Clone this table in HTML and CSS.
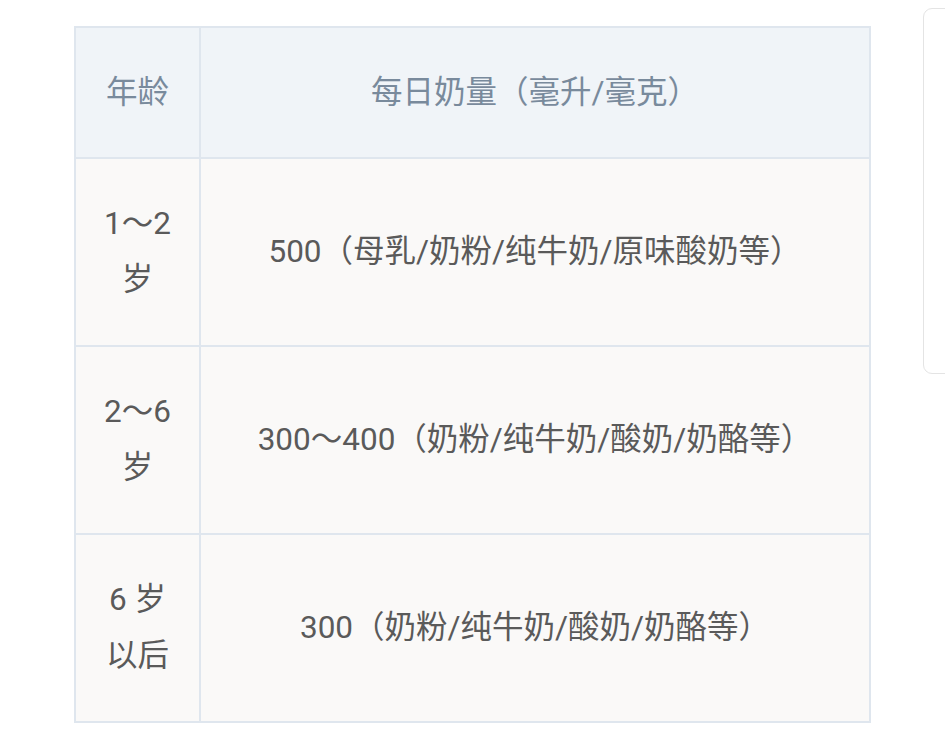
FILE: index.html
```html
<!DOCTYPE html>
<html lang="zh-CN">
<head>
<meta charset="utf-8">
<link rel="stylesheet" href="styles.css">
</head>
<body>
<div class="page">
  <table class="milk">
    <thead>
      <tr><th class="c1">年龄</th><th>每日奶量（毫升/毫克）</th></tr>
    </thead>
    <tbody>
      <tr><td class="c1">1～2<br>岁</td><td>500（母乳/奶粉/纯牛奶/原味酸奶等）</td></tr>
      <tr><td class="c1">2～6<br>岁</td><td>300～400（奶粉/纯牛奶/酸奶/奶酪等）</td></tr>
      <tr><td class="c1">6 岁<br>以后</td><td>300（奶粉/纯牛奶/酸奶/奶酪等）</td></tr>
    </tbody>
  </table>
  <div class="side"></div>
</div>
</body>
</html>
```
FILE: styles.css
```css
html, body {
  margin: 0;
  padding: 0;
  background: #ffffff;
  width: 945px;
  height: 747px;
  overflow: hidden;
}
body {
  font-family: Roboto, "Noto Sans CJK SC", sans-serif;
}
.page {
  position: relative;
  padding: 26px 0 0 74px;
}
.milk {
  border-collapse: collapse;
  width: 797px;
  table-layout: fixed;
  font-size: 31.5px;
  line-height: 56px;
  text-align: center;
}
.milk th, .milk td {
  border: 2px solid #dfe6ee;
  padding: 0;
  vertical-align: middle;
}
.milk .c1 {
  width: 123px;
}
.milk th {
  background: #f0f4f8;
  color: #798a9c;
  font-weight: normal;
  height: 129px;
}
.milk td {
  background: #faf9f8;
  color: #5a5a5a;
  height: 186px;
}
.side {
  position: absolute;
  left: 923px;
  top: 8px;
  width: 40px;
  height: 364px;
  border: 1px solid #e4e4e4;
  border-radius: 9px;
}
```
